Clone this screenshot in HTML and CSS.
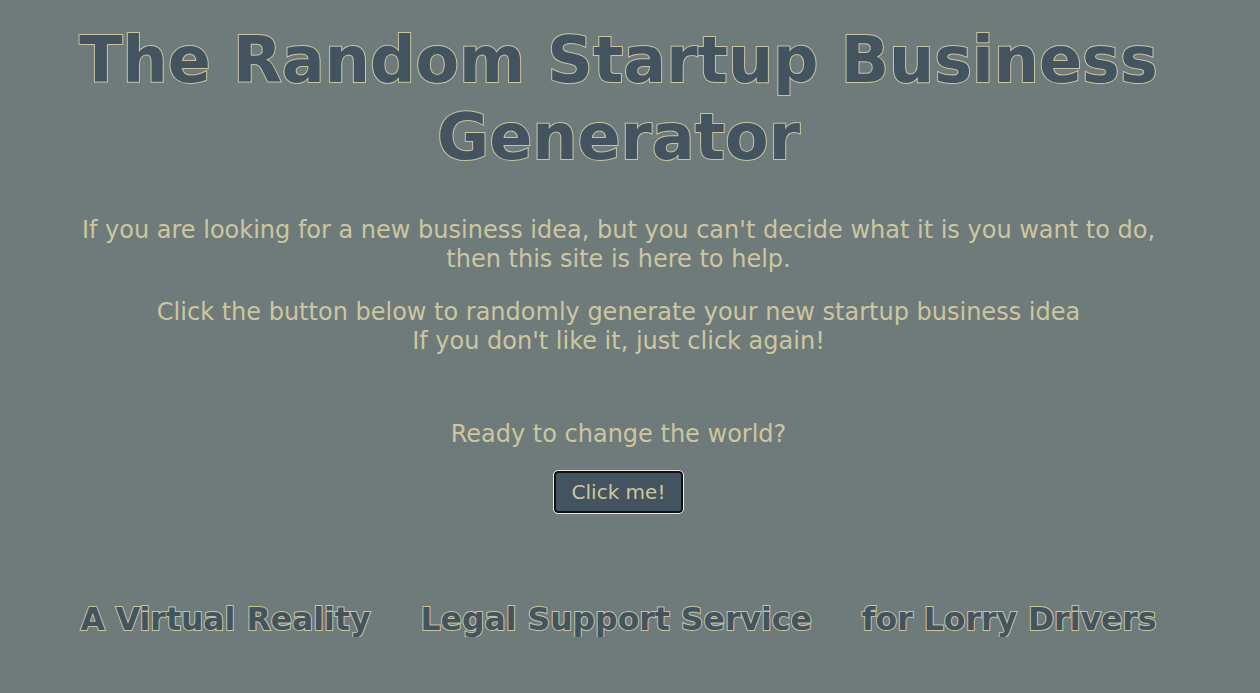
FILE: index.html
```html
<!DOCTYPE html>
<html lang="en">
<head>
<meta charset="utf-8">
<title>The Random Startup Business Generator</title>
<link rel="stylesheet" href="styles.css">
</head>
<body>
<main class="page">
  <h1 class="title">The Random Startup Business Generator</h1>
  <p class="intro">If you are looking for a new business idea, but you can't decide what it is you want to do, then this site is here to help.</p>
  <p class="intro">Click the button below to randomly generate your new startup business idea<br>If you don't like it, just click again!</p>
  <p class="ready">Ready to change the world?</p>
  <button class="btn" type="button">Click me!</button>
  <div class="result">
    <span class="part">A Virtual Reality</span>
    <span class="part">Legal Support Service</span>
    <span class="part">for Lorry Drivers</span>
  </div>
</main>
</body>
</html>
```
FILE: styles.css
```css
html, body {
  margin: 0;
  padding: 0;
  background: #6e7b7a;
}
body {
  padding-right: 23px;
  font-family: "DejaVu Sans", Verdana, sans-serif;
  color: #cdc6a1;
}
.page {
  width: 1100px;
  margin: 0 auto;
  display: flex;
  flex-direction: column;
  align-items: center;
  text-align: center;
}
.title {
  margin: 22px 0 0;
  font-size: 63.5px;
  line-height: 77px;
  font-weight: bold;
  color: #43535f;
  -webkit-text-stroke: 2px #c9c3a0;
  paint-order: stroke fill;
}
.intro {
  margin: 40px 0 0;
  font-size: 24px;
  line-height: 29px;
}
.intro + .intro {
  margin-top: 24px;
}
.ready {
  margin: 64px 0 0;
  font-size: 24px;
  line-height: 29px;
}
.btn {
  margin-top: 22px;
  width: 129px;
  height: 42px;
  background: #43535f;
  color: #cdc6a1;
  font-family: "DejaVu Sans", Verdana, sans-serif;
  font-size: 20px;
  border: 2px solid #111;
  border-radius: 4px;
  outline: 1px solid #e8e8e8;
  outline-offset: 0;
}
.result {
  margin-top: 88px;
  display: flex;
  justify-content: center;
  gap: 50px;
}
.part {
  font-size: 31.5px;
  font-weight: bold;
  color: #43535f;
  -webkit-text-stroke: 2px #c9c3a0;
  paint-order: stroke fill;
}
```
